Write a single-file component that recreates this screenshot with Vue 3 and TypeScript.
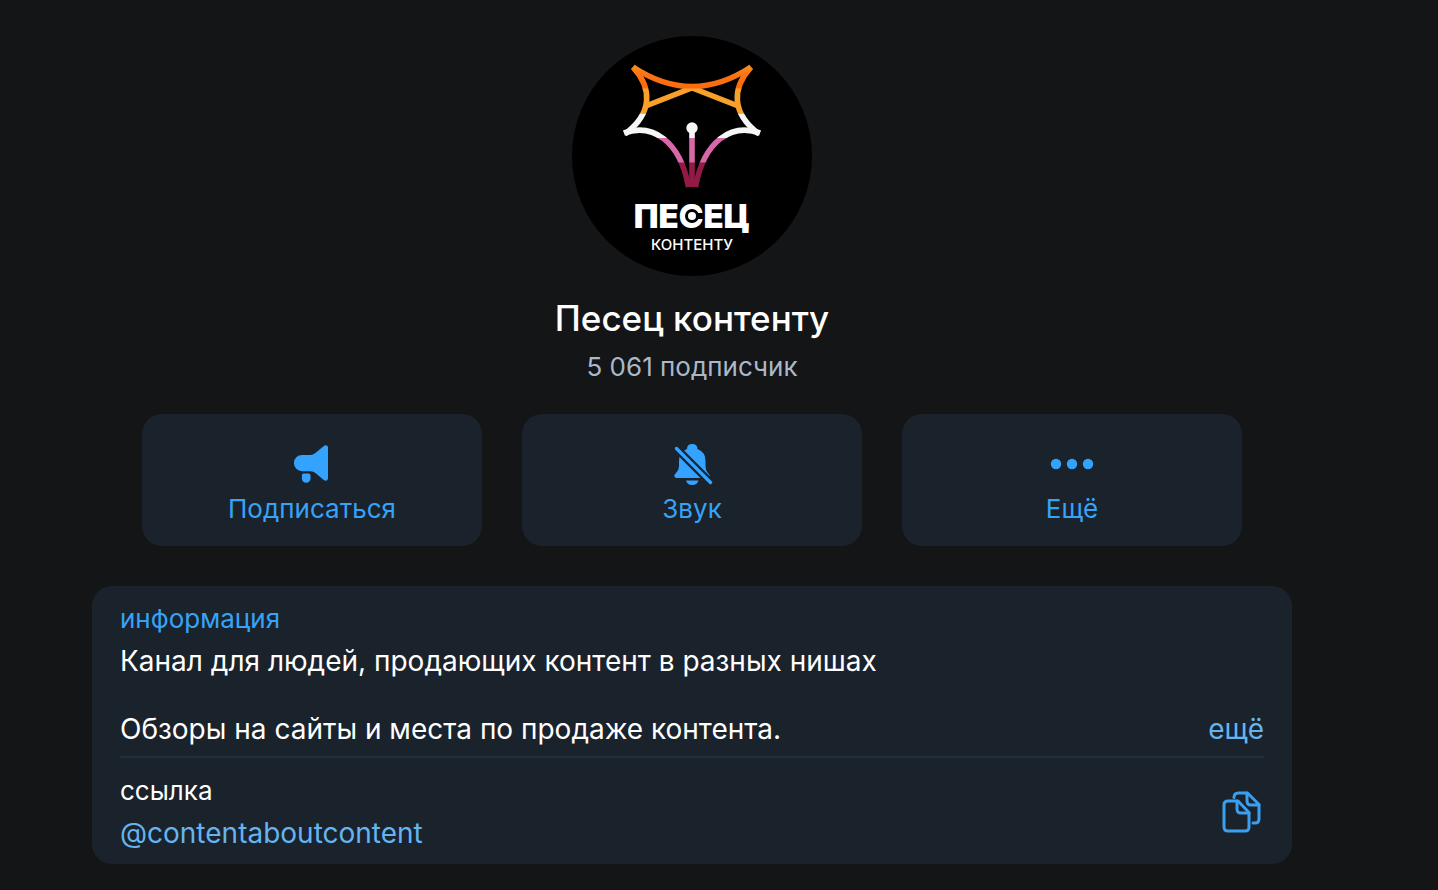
<script setup lang="ts">
const title = 'Песец контенту'
const subscribers = '5 061 подписчик'
const description: string[] = [
  'Канал для людей, продающих контент в разных нишах',
  'Обзоры на сайты и места по продаже контента.',
]
const handle = '@contentaboutcontent'
</script>

<template>
  <main class="profile">
    <header class="head">
      <svg class="avatar" viewBox="0 0 240 240" role="img" aria-label="Песец контенту">
        <defs>
          <linearGradient id="bands" gradientUnits="userSpaceOnUse" x1="0" y1="0" x2="0" y2="240">
            <stop offset="0.13" stop-color="#f98a1c" />
            <stop offset="0.16" stop-color="#fa7414" />
            <stop offset="0.215" stop-color="#fd6a0c" />
            <stop offset="0.222" stop-color="#f8a02a" />
            <stop offset="0.322" stop-color="#f8a02a" />
            <stop offset="0.326" stop-color="#f6f6f6" />
            <stop offset="0.423" stop-color="#f6f6f6" />
            <stop offset="0.427" stop-color="#d767a6" />
            <stop offset="0.525" stop-color="#d767a6" />
            <stop offset="0.529" stop-color="#931a45" />
          </linearGradient>
        </defs>
        <circle cx="120" cy="120" r="120" fill="#000" />
        <g fill="none" stroke="url(#bands)" stroke-width="5.6">
          <path d="M75 69.500L121 51.500M165 69.500L119 51.500" />
          <path d="M61 31Q120 70 179 31" />
          <path d="M61 31C80 52 81 77 53 98" />
          <path d="M179 31C160 52 159 77 187 98" />
          <path d="M52 97C80 87 108 104 116.500 151" />
          <path d="M188 97C160 87 132 104 123.500 151" />
          <path d="M120 92V151" />
        </g>
        <circle cx="120" cy="92" r="5.700" fill="#f6f6f6" />
        <g fill="#fff" text-anchor="middle">
          <text class="logo-name" x="120" y="192">ПЕСЕЦ</text>
          <text class="logo-sub" x="120" y="214">КОНТЕНТУ</text>
        </g>
        <circle cx="120" cy="180" r="5.500" fill="#fff" stroke="#000" stroke-width="3" />
      </svg>
      <h1 class="title">{{ title }}</h1>
      <p class="subscribers">{{ subscribers }}</p>
    </header>

    <div class="actions">
      <button type="button" class="action">
        <svg class="icon" viewBox="0 1 44 44" aria-hidden="true">
          <path d="M12 15H20C23 15 24 14 26 12.500L33.500 6.200C36 4.300 38 5.500 38 7.500V38C38 40.500 36 41.700 33.500 39.700L26 33.500C24 32 23 31.200 20 31.200H12A8.100 8.100 0 0 1 12 15Z" />
          <path d="M13.500 33.500H18.500Q20.500 33.500 20.500 35.500V38.500A4.200 4.200 0 0 1 11.900 38.500V35.500Q11.900 33.500 13.500 33.500Z" />
        </svg>
        <span>Подписаться</span>
      </button>
      <button type="button" class="action">
        <svg class="icon" viewBox="0 0 44 44" aria-hidden="true">
          <path d="M17 8Q17 3 22.200 3T27.500 8Q35.500 11 35.500 20V25Q35.500 29 37.500 31.500Q41 34.500 39.500 37H6Q2.500 35 6 32Q9 29 9 25V20Q9 11 17 8Z" />
          <path d="M16 39.500H28.500Q27 44 22.200 44T16 39.500Z" />
          <path class="slash-gap" d="M2 3L44 45" />
          <path class="slash" d="M6.500 7.500L40.500 41.500" />
        </svg>
        <span>Звук</span>
      </button>
      <button type="button" class="action">
        <svg class="icon" viewBox="0 0 44 44" aria-hidden="true">
          <circle cx="6" cy="23" r="5.200" />
          <circle cx="22" cy="23" r="5.200" />
          <circle cx="38" cy="23" r="5.200" />
        </svg>
        <span>Ещё</span>
      </button>
    </div>

    <section class="card">
      <div class="about">
        <h2 class="label accent">информация</h2>
        <p class="text">{{ description[0] }}</p>
        <div class="row">
          <p class="text">{{ description[1] }}</p>
          <a class="text link" href="#more">ещё</a>
        </div>
      </div>
      <div class="address">
        <div>
          <h2 class="label">ссылка</h2>
          <a class="text link" href="#channel">{{ handle }}</a>
        </div>
        <button type="button" class="copy" aria-label="Копировать ссылку">
          <svg viewBox="0 0 40 42" aria-hidden="true">
            <path d="M6 10H16L27 21.500V36Q27 40 23 40H6Q2 40 2 36V14Q2 10 6 10Z" />
            <path d="M15 10V18Q15 22 19 22H27" />
            <path d="M12 6.500Q12 2 16.500 2H25.500L37 13.500V28Q37 32 33 32H31" />
            <path d="M25 2V10Q25 14 29 14H37" />
          </svg>
        </button>
      </div>
    </section>
  </main>
</template>

<style>
body {
  margin: 0;
  background: #131516;
}
</style>

<style scoped>
.profile {
  box-sizing: border-box;
  min-height: 100vh;
  padding: 36px 146px 24px 92px;
  background: #131516;
  color: #fff;
  font-family: Inter, 'Noto Sans', sans-serif;
}
.head {
  display: flex;
  flex-direction: column;
  align-items: center;
}
.avatar {
  width: 240px;
  height: 240px;
}
.logo-name {
  font-size: 33px;
  font-weight: 900;
}
.logo-sub {
  font-size: 15px;
  font-weight: 500;
}
.title {
  margin: 20px 0 0;
  font-size: 35px;
  font-weight: 500;
  line-height: 44px;
}
.subscribers {
  margin: 10px 0 0;
  color: #a9b8cb;
  font-size: 26px;
  line-height: 34px;
}
.actions {
  display: grid;
  grid-template-columns: repeat(3, 1fr);
  gap: 40px;
  margin: 30px 50px 40px;
}
.action {
  display: flex;
  flex-direction: column;
  align-items: center;
  gap: 7px;
  padding: 27px 16px 20px;
  border: 0;
  border-radius: 20px;
  background: #1a222c;
  color: #36a2f8;
  font: inherit;
  font-size: 26px;
  line-height: 34px;
  cursor: pointer;
}
.icon {
  width: 44px;
  height: 44px;
  fill: #33a3ff;
  overflow: visible;
}
.slash,
.slash-gap {
  fill: none;
}
.slash {
  stroke: #33a3ff;
  stroke-width: 3.4;
  stroke-linecap: round;
}
.slash-gap {
  stroke: #1a222c;
  stroke-width: 8;
}
.card {
  padding: 16px 28px 14px;
  border-radius: 20px;
  background: #1a222c;
}
.about {
  padding-bottom: 10px;
  border-bottom: 2px solid #20303b;
}
.label {
  margin: 0;
  font-size: 26px;
  font-weight: 400;
  line-height: 34px;
}
.accent {
  color: #36a2f8;
}
.text {
  margin: 0;
  font-size: 28px;
  line-height: 34px;
}
.about > .text {
  margin-top: 8px;
}
.row {
  display: flex;
  justify-content: space-between;
  margin-top: 34px;
}
.link {
  color: #64b5ef;
  text-decoration: none;
}
.address {
  display: flex;
  align-items: center;
  justify-content: space-between;
  padding-top: 16px;
}
.address .link {
  display: block;
  margin-top: 8px;
}
.copy {
  padding: 0 2px 0 0;
  border: 0;
  background: none;
  cursor: pointer;
}
.copy svg {
  display: block;
  width: 40px;
  height: 42px;
  fill: none;
  stroke: #3a9fee;
  stroke-width: 3;
  stroke-linecap: round;
  stroke-linejoin: round;
}
</style>
